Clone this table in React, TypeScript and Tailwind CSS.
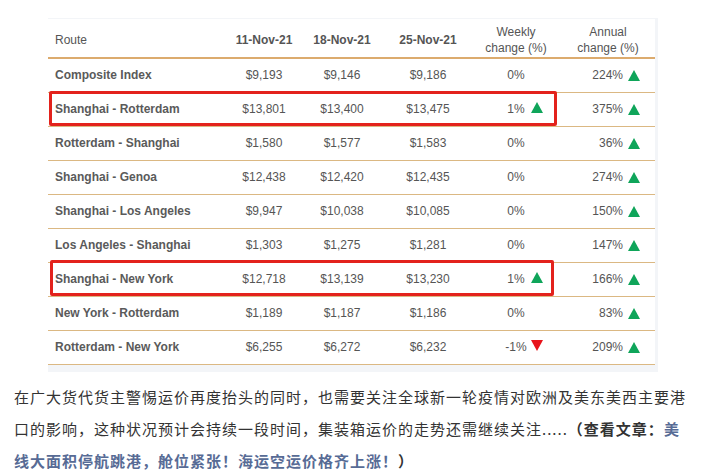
import React from 'react';

type Row = {
  route: string;
  a: string;
  b: string;
  c: string;
  weekly: string;
  weeklyDir?: 'up' | 'down';
  annual: string;
};

const rows: Row[] = [
  { route: 'Composite Index', a: '$9,193', b: '$9,146', c: '$9,186', weekly: '0%', annual: '224%' },
  { route: 'Shanghai - Rotterdam', a: '$13,801', b: '$13,400', c: '$13,475', weekly: '1%', weeklyDir: 'up', annual: '375%' },
  { route: 'Rotterdam - Shanghai', a: '$1,580', b: '$1,577', c: '$1,583', weekly: '0%', annual: '36%' },
  { route: 'Shanghai - Genoa', a: '$12,438', b: '$12,420', c: '$12,435', weekly: '0%', annual: '274%' },
  { route: 'Shanghai - Los Angeles', a: '$9,947', b: '$10,038', c: '$10,085', weekly: '0%', annual: '150%' },
  { route: 'Los Angeles - Shanghai', a: '$1,303', b: '$1,275', c: '$1,281', weekly: '0%', annual: '147%' },
  { route: 'Shanghai - New York', a: '$12,718', b: '$13,139', c: '$13,230', weekly: '1%', weeklyDir: 'up', annual: '166%' },
  { route: 'New York - Rotterdam', a: '$1,189', b: '$1,187', c: '$1,186', weekly: '0%', annual: '83%' },
  { route: 'Rotterdam - New York', a: '$6,255', b: '$6,272', c: '$6,232', weekly: '-1%', weeklyDir: 'down', annual: '209%' },
];

const Arrow = ({ dir }: { dir: 'up' | 'down' }) => (
  <svg width="12" height="11" viewBox="0 0 12 11" className="block">
    {dir === 'up' ? (
      <polygon points="6,0 12,11 0,11" fill="#0fa55a" />
    ) : (
      <polygon points="0,0 12,0 6,11" fill="#e8141b" />
    )}
  </svg>
);

export default function App() {
  return (
    <div className="w-[702px] h-[476px] bg-white overflow-hidden" style={{ fontFamily: '"Liberation Sans", Arial, sans-serif' }}>
      <div className="h-[18px]" />

      {/* table frame */}
      <div className="relative ml-[48px] w-[610px] bg-[#f3f5f8] pt-px pr-[3px] pb-[7px]">
        <table className="w-[607px] table-fixed border-collapse bg-white text-[12px] text-[#555]">
          <colgroup>
            <col className="w-[177px]" />
            <col className="w-[78px]" />
            <col className="w-[78px]" />
            <col className="w-[94px]" />
            <col className="w-[82px]" />
            <col className="w-[98px]" />
          </colgroup>
          <thead>
            <tr className="h-[39px] border-b-2 border-[#dcab6e]">
              <th className="pt-[3px] pl-[7px] text-left font-normal">Route</th>
              <th className="pt-[3px] text-center font-bold">11-Nov-21</th>
              <th className="pt-[3px] text-center font-bold">18-Nov-21</th>
              <th className="pt-[3px] text-center font-bold">25-Nov-21</th>
              <th className="pt-[3px] text-center font-normal leading-[16px]">Weekly<br />change (%)</th>
              <th className="pt-[3px] text-center font-normal leading-[16px] pl-[4px]">Annual<br />change (%)</th>
            </tr>
          </thead>
          <tbody>
            {rows.map((r) => (
              <tr key={r.route} className="h-[34px] border-b border-[#dbb883]">
                <td className="pl-[7px] font-bold text-[#5a5a5a] whitespace-nowrap">{r.route}</td>
                <td className="text-center">{r.a}</td>
                <td className="text-center">{r.b}</td>
                <td className="text-center">{r.c}</td>
                <td className="text-center">
                  <span className="relative inline-block">
                    {r.weekly}
                    {r.weeklyDir && (
                      <span className={`absolute top-[2px] left-full ${r.weeklyDir === 'up' ? 'ml-[6px]' : 'ml-[4px]'}`}>
                        <Arrow dir={r.weeklyDir} />
                      </span>
                    )}
                  </span>
                </td>
                <td className="pr-[15px]">
                  <div className="flex items-center justify-end gap-[5px]">
                    <span>{r.annual}</span>
                    <Arrow dir="up" />
                  </div>
                </td>
              </tr>
            ))}
          </tbody>
        </table>

        {/* highlight boxes */}
        <div className="absolute left-[1px] top-[73px] w-[508px] h-[35px] border-[3px] border-[#e3221c] rounded-[2px]" />
        <div className="absolute left-[2px] top-[242px] w-[504px] h-[36px] border-[3px] border-[#e3221c] rounded-[2px]" />
      </div>

      <p
        className="mt-[9px] ml-[14px] w-[680px] text-[15px] leading-[32px] tracking-[1px] text-[#333]"
        style={{ fontFamily: '"Noto Sans CJK SC", "Liberation Sans", sans-serif' }}
      >
        在广大货代货主警惕运价再度抬头的同时，也需要关注全球新一轮疫情对欧洲及美东美西主要港口的影响，这种状况预计会持续一段时间，集装箱运价的走势还需继续关注.....
        <span className="font-bold">（查看文章：</span>
        <span className="font-bold text-[#576b95]">美线大面积停航跳港，舱位紧张！海运空运价格齐上涨！</span>
        <span className="font-bold">）</span>
      </p>
    </div>
  );
}
